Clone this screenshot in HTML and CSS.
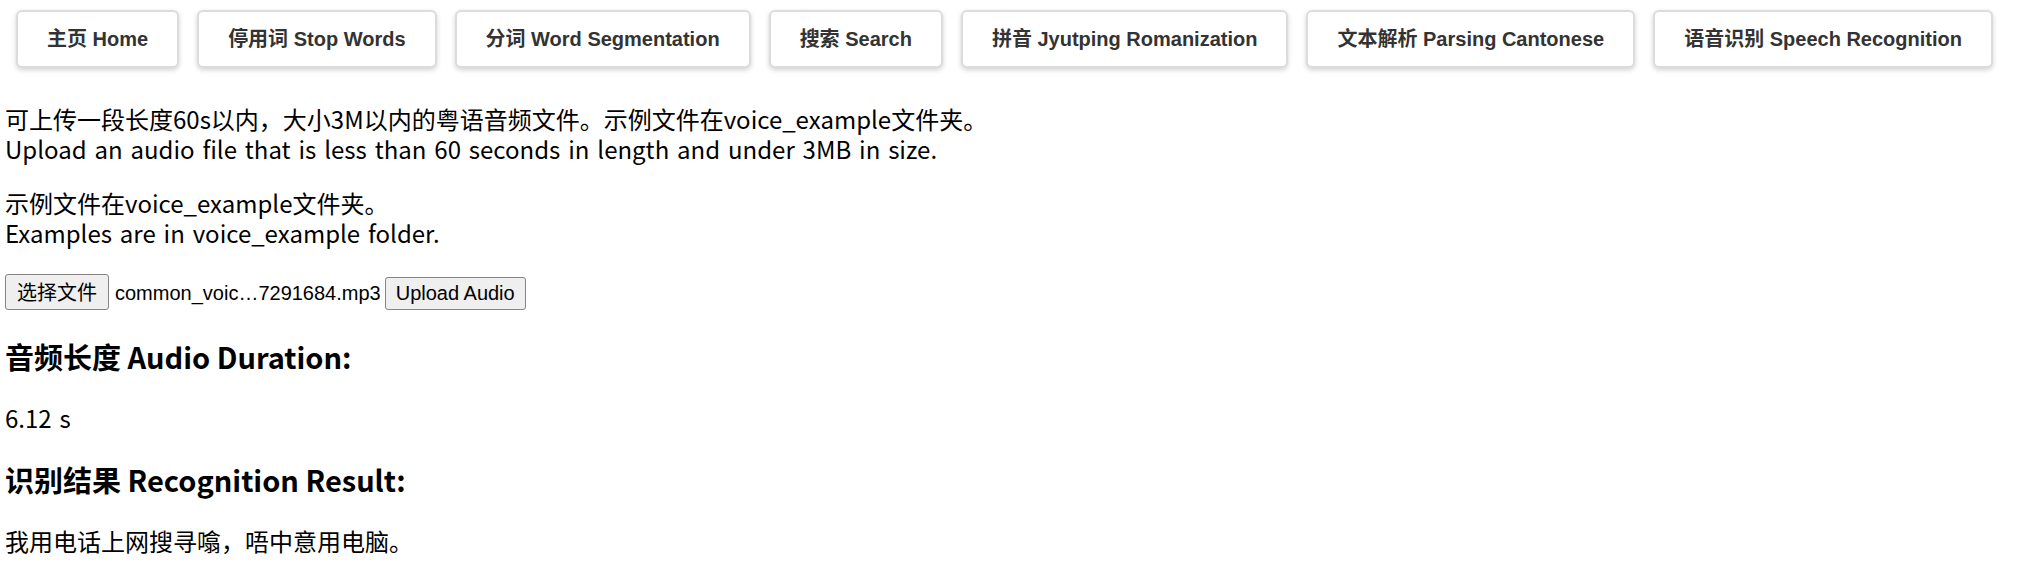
FILE: index.html
```html
<!DOCTYPE html>
<html lang="zh">
<head>
<meta charset="utf-8">
<title>语音识别 Speech Recognition</title>
<link rel="stylesheet" href="styles.css">
</head>
<body>
  <nav class="nav">
    <a class="nav-btn" href="#">主页 Home</a>
    <a class="nav-btn" href="#">停用词 Stop Words</a>
    <a class="nav-btn" href="#">分词 Word Segmentation</a>
    <a class="nav-btn" href="#">搜索 Search</a>
    <a class="nav-btn" href="#">拼音 Jyutping Romanization</a>
    <a class="nav-btn" href="#">文本解析 Parsing Cantonese</a>
    <a class="nav-btn" href="#">语音识别 Speech Recognition</a>
  </nav>

  <p class="text">可上传一段长度60s以内，大小3M以内的粤语音频文件。示例文件在voice_example文件夹。<br>Upload an audio file that is less than 60 seconds in length and under 3MB in size.</p>
  <p class="text">示例文件在voice_example文件夹。<br>Examples are in voice_example folder.</p>

  <form class="upload-row" onsubmit="return false;">
    <button type="button" class="ctrl ctrl-file">选择文件</button>
    <span class="file-name">common_voic…7291684.mp3</span>
    <button type="submit" class="ctrl ctrl-upload">Upload Audio</button>
  </form>

  <h3 class="heading">音频长度 Audio Duration:</h3>
  <p class="text">6.12 s</p>

  <h3 class="heading">识别结果 Recognition Result:</h3>
  <p class="text">我用电话上网搜寻噏，唔中意用电脑。</p>
</body>
</html>
```

FILE: styles.css
```css
html, body {
  background: #ffffff;
}

body {
  margin: 0;
  padding: 0 5px;
  font-family: "Noto Sans CJK SC", "Noto Sans", sans-serif;
  font-size: 24px;
  line-height: 30px;
  color: #000000;
}

.nav {
  display: flex;
  gap: 18px;
  padding: 10px 0 12px 11px;
}

.nav-btn {
  box-sizing: border-box;
  height: 58px;
  display: flex;
  align-items: center;
  padding: 0 29px;
  background: #ffffff;
  border: 2px solid #dcdcdc;
  border-radius: 6px;
  box-shadow: 0 2px 5px rgba(0, 0, 0, 0.18);
  color: #333333;
  font-family: "Liberation Sans", "Noto Sans CJK SC", sans-serif;
  font-weight: bold;
  font-size: 20px;
  line-height: 23px;
  text-decoration: none;
  white-space: nowrap;
}

.text {
  margin: 24px 0;
  word-spacing: 2.5px;
}

.upload-row {
  display: flex;
  align-items: baseline;
  margin: 26px 0 0;
  font-family: "Liberation Sans", "Noto Sans CJK SC", sans-serif;
  font-size: 20px;
}

.ctrl {
  margin: 0;
  background: #efefef;
  border: 1px solid #858585;
  border-radius: 3px;
  color: #000000;
  font-size: 20px;
  padding: 4px 10px;
}

.ctrl-file {
  font-family: "Noto Sans CJK SC", sans-serif;
  line-height: 26px;
  padding: 4px 11px;
}

.ctrl-upload {
  font-family: "Liberation Sans", sans-serif;
  line-height: 23px;
}

.file-name {
  margin: 0 4px 0 6px;
  line-height: 23px;
  color: #000000;
}

.heading {
  margin: 28px 0;
  font-size: 29px;
  line-height: 37px;
  font-weight: bold;
}
```
